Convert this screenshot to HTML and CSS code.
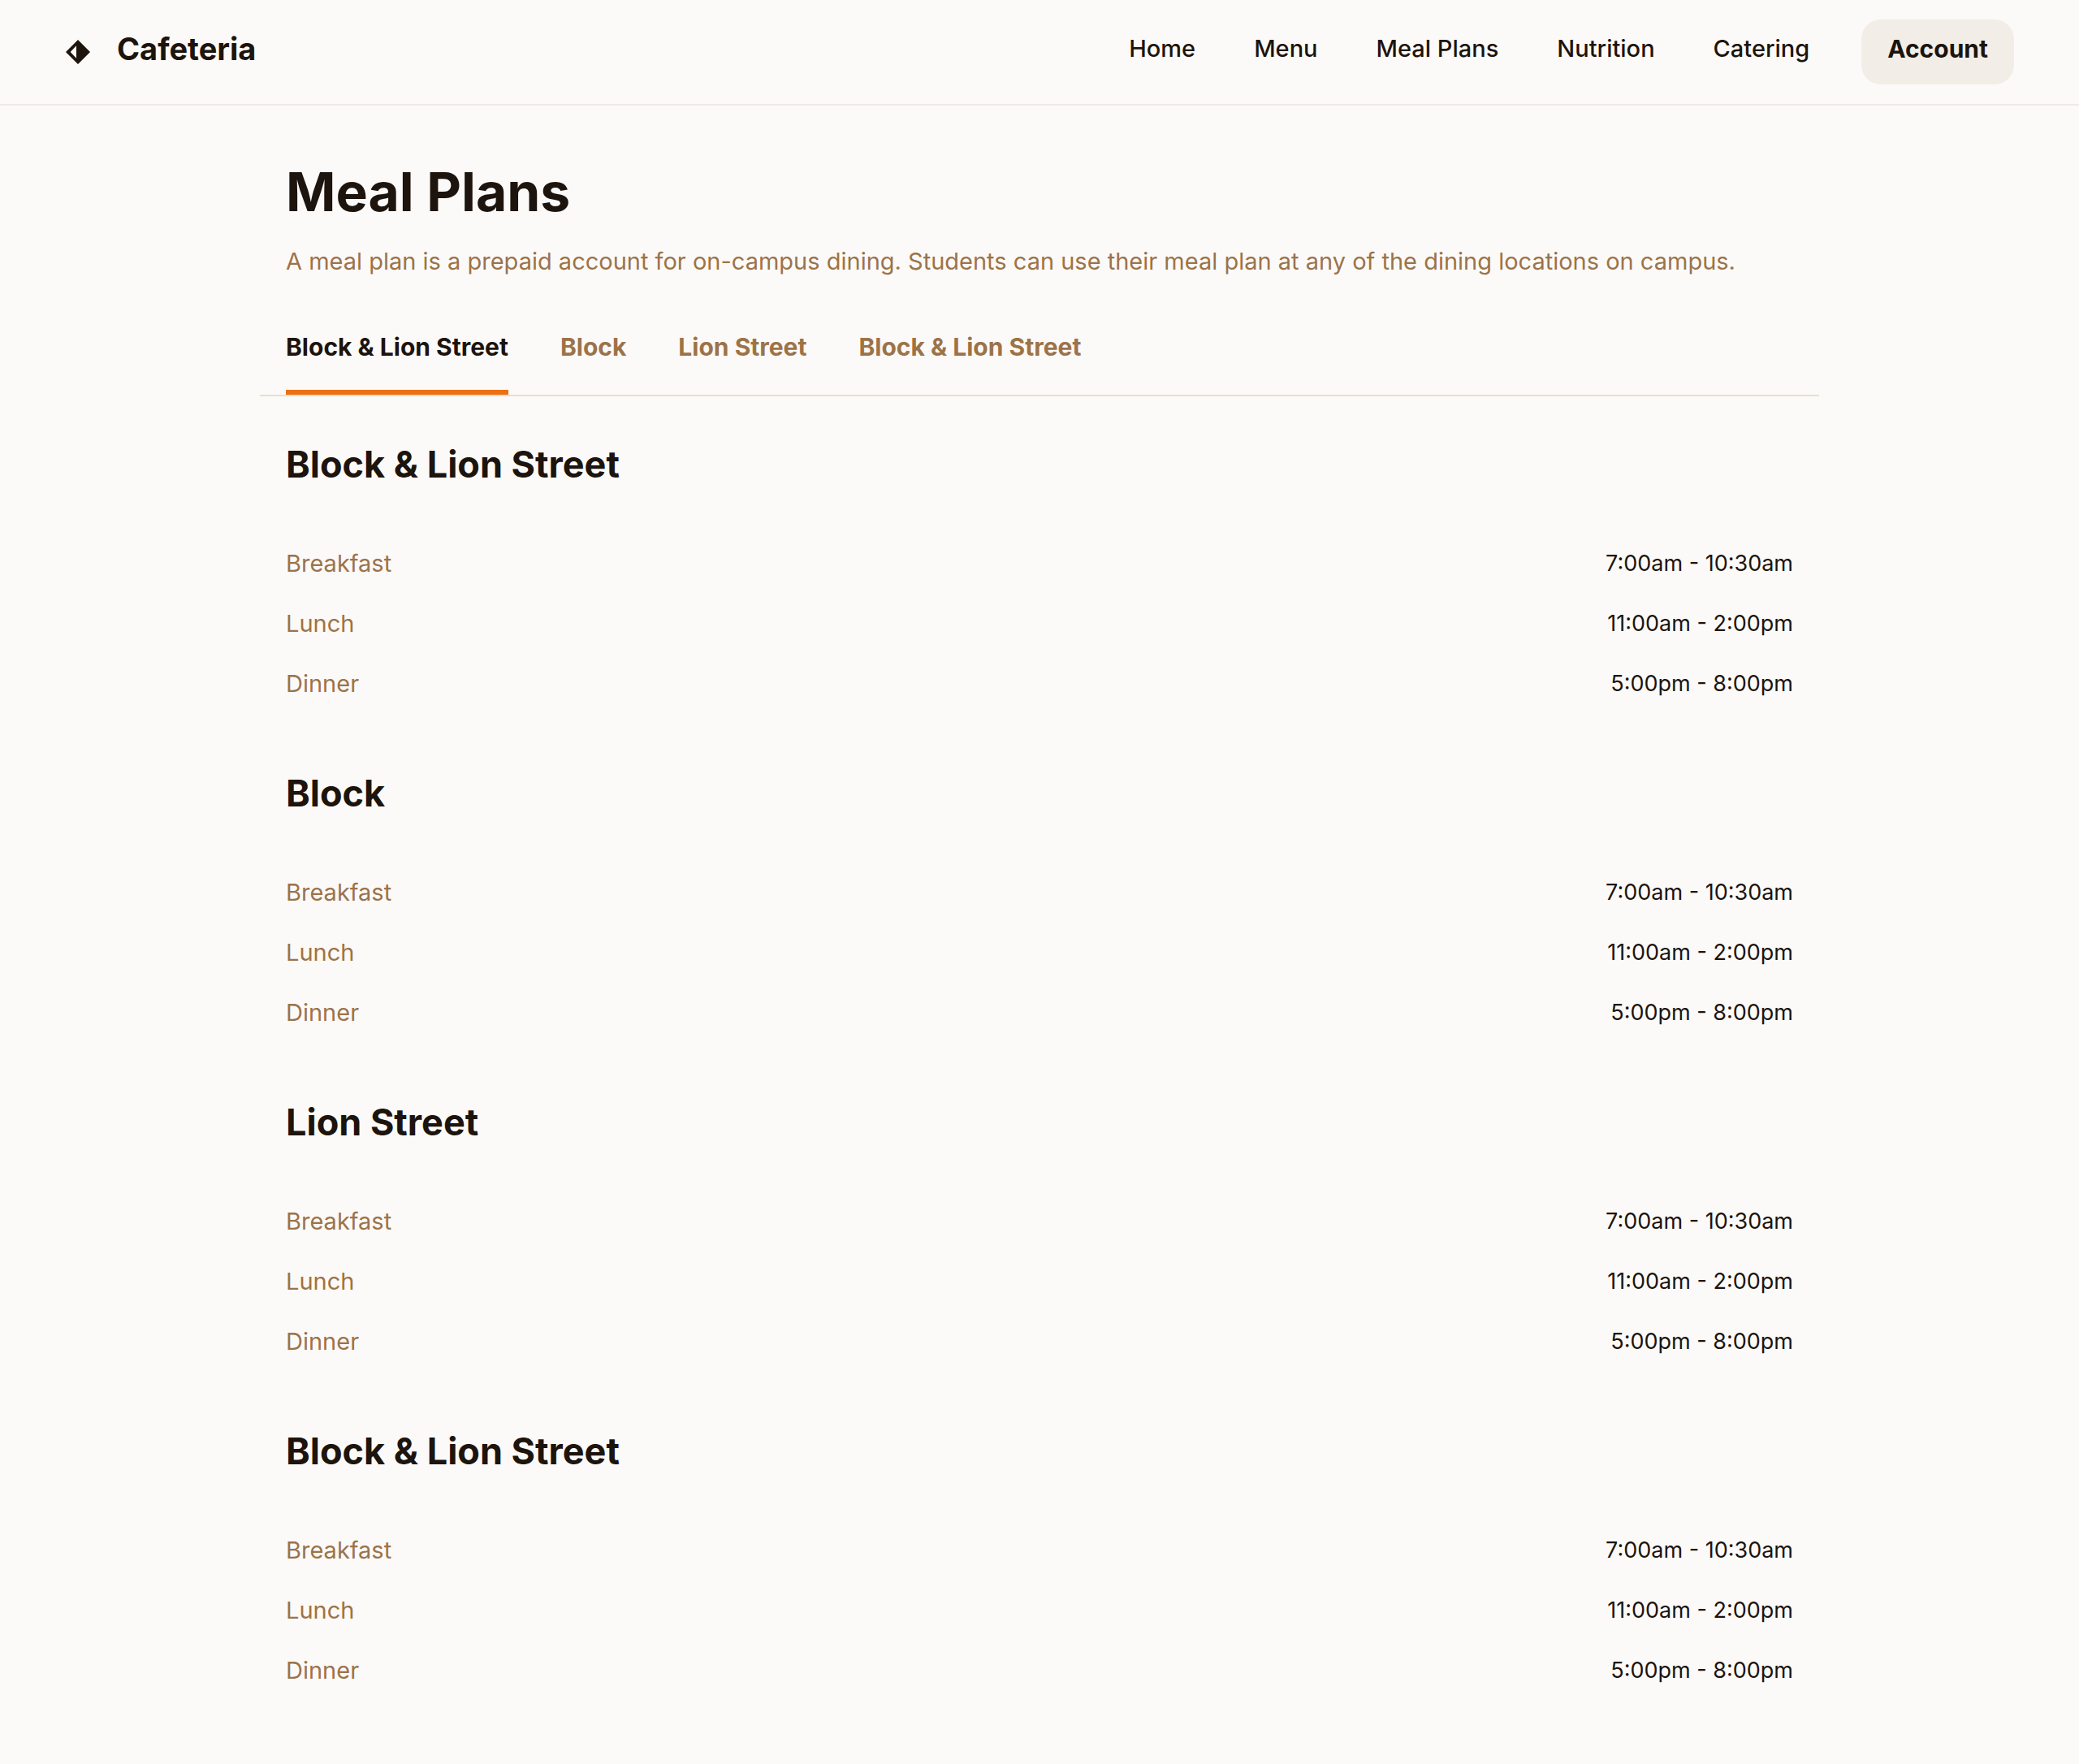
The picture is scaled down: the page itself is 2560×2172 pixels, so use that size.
FILE: index.html
```html
<!DOCTYPE html>
<html lang="en">
<head>
<meta charset="utf-8">
<meta name="viewport" content="width=device-width, initial-scale=1">
<title>Meal Plans - Cafeteria</title>
<link rel="stylesheet" href="styles.css">
</head>
<body>
<header class="site-header">
  <a class="brand" href="#">
    <svg class="brand-mark" viewBox="0 0 48 48" aria-hidden="true"><path fill="currentColor" fill-rule="evenodd" d="M24 1.5L46.5 24L24 46.5L1.5 24ZM21 12.5L10 24L21 35.5Z"/></svg>
    <span class="brand-name">Cafeteria</span>
  </a>
  <div class="header-actions">
    <nav class="nav" aria-label="Main">
      <a href="#">Home</a>
      <a href="#">Menu</a>
      <a href="#">Meal Plans</a>
      <a href="#">Nutrition</a>
      <a href="#">Catering</a>
    </nav>
    <button class="account" type="button">Account</button>
  </div>
</header>
<main class="page">
  <div class="intro">
    <h1>Meal Plans</h1>
    <p>A meal plan is a prepaid account for on-campus dining. Students can use their meal plan at any of the dining locations on campus.</p>
  </div>
  <nav class="tabs" aria-label="Plans">
    <a class="tab tab-active" href="#plan-1" aria-current="true">Block &amp; Lion Street</a>
    <a class="tab" href="#plan-2">Block</a>
    <a class="tab" href="#plan-3">Lion Street</a>
    <a class="tab" href="#plan-4">Block &amp; Lion Street</a>
  </nav>
  <section class="plan" id="plan-1">
    <h2>Block &amp; Lion Street</h2>
    <table class="hours">
      <tr><th scope="row">Breakfast</th><td>7:00am - 10:30am</td></tr>
      <tr><th scope="row">Lunch</th><td>11:00am - 2:00pm</td></tr>
      <tr><th scope="row">Dinner</th><td>5:00pm - 8:00pm</td></tr>
    </table>
  </section>
  <section class="plan" id="plan-2">
    <h2>Block</h2>
    <table class="hours">
      <tr><th scope="row">Breakfast</th><td>7:00am - 10:30am</td></tr>
      <tr><th scope="row">Lunch</th><td>11:00am - 2:00pm</td></tr>
      <tr><th scope="row">Dinner</th><td>5:00pm - 8:00pm</td></tr>
    </table>
  </section>
  <section class="plan" id="plan-3">
    <h2>Lion Street</h2>
    <table class="hours">
      <tr><th scope="row">Breakfast</th><td>7:00am - 10:30am</td></tr>
      <tr><th scope="row">Lunch</th><td>11:00am - 2:00pm</td></tr>
      <tr><th scope="row">Dinner</th><td>5:00pm - 8:00pm</td></tr>
    </table>
  </section>
  <section class="plan" id="plan-4">
    <h2>Block &amp; Lion Street</h2>
    <table class="hours">
      <tr><th scope="row">Breakfast</th><td>7:00am - 10:30am</td></tr>
      <tr><th scope="row">Lunch</th><td>11:00am - 2:00pm</td></tr>
      <tr><th scope="row">Dinner</th><td>5:00pm - 8:00pm</td></tr>
    </table>
  </section>
</main>
</body>
</html>
```
FILE: styles.css
```css
* {
  box-sizing: border-box;
}

body {
  margin: 0;
  background: #fcfaf8;
  color: #1c140d;
  font-family: Inter, "Liberation Sans", sans-serif;
  font-size: 29px;
  line-height: 42px;
}

a {
  color: inherit;
  text-decoration: none;
}

.site-header {
  display: flex;
  align-items: center;
  justify-content: space-between;
  padding: 24px 80px;
  border-bottom: 2px solid #eeebe7;
}

.brand {
  display: flex;
  align-items: center;
  gap: 32px;
}

.brand-mark {
  width: 32px;
  height: 32px;
}

.brand-name {
  padding-bottom: 8px;
  font-size: 38px;
  font-weight: 700;
}

.header-actions {
  display: flex;
  align-items: center;
  gap: 64px;
}

.nav {
  display: flex;
  gap: 72px;
  padding-bottom: 8px;
  font-weight: 500;
}

.account {
  height: 80px;
  padding: 0 32px 8px;
  border: 0;
  border-radius: 24px;
  background: #f2ede7;
  color: inherit;
  font: inherit;
  font-size: 30px;
  font-weight: 700;
}

.page {
  max-width: 1920px;
  margin: 0 auto;
  padding: 62px 0 56px;
}

.intro {
  padding: 0 32px;
}

.intro h1 {
  margin: 0;
  font-size: 66px;
  font-weight: 700;
  line-height: 88px;
}

.intro p {
  margin: 21px 0 0;
  color: #9c7349;
}

.tabs {
  display: flex;
  gap: 64px;
  margin-bottom: 16px;
  padding: 63px 32px 0;
  border-bottom: 2px solid #e5dfcf;
}

.tab {
  padding-bottom: 32px;
  border-bottom: 6px solid transparent;
  color: #9c7349;
  font-size: 30px;
  font-weight: 700;
}

.tab-active {
  border-bottom-color: #ec7014;
  color: #1c140d;
}

.plan {
  padding: 40px 32px 26px;
}

.plan h2 {
  margin: 0;
  font-size: 45px;
  line-height: 55px;
}

.hours {
  width: 100%;
  margin-top: 62px;
  border-collapse: collapse;
}

.hours th,
.hours td {
  padding: 12px 0 20px;
  font-weight: 400;
}

.hours th {
  color: #9c7349;
  text-align: left;
}

.hours td {
  font-size: 27px;
  text-align: right;
}
```
